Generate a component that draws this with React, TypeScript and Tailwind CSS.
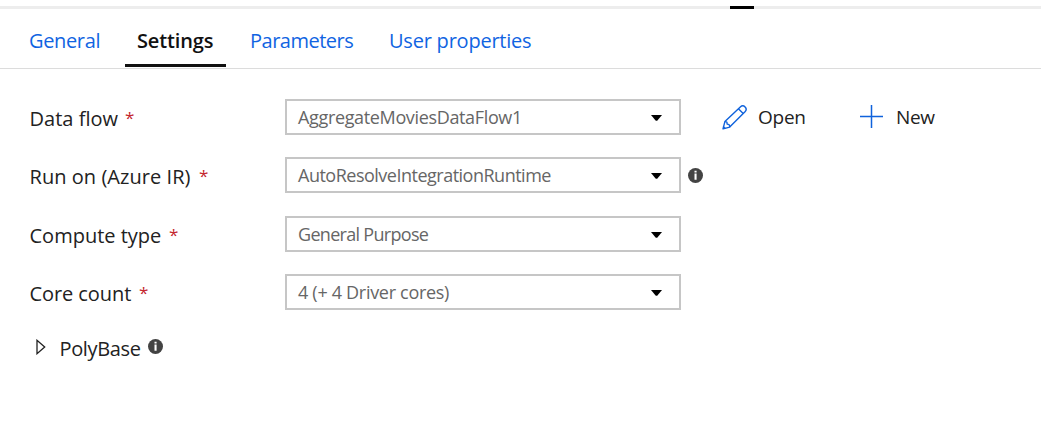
import React from "react";

function InfoIcon({ className = "" }: { className?: string }) {
  return (
    <svg className={className} width="15" height="15" viewBox="0 0 15 15" aria-hidden="true">
      <circle cx="7.5" cy="7.5" r="7.5" fill="#434343" />
      <path d="M6.5 2.8h2.1v1.8H6.5zM6.5 5.6h2.1v6.2H6.5z" fill="#fff" />
    </svg>
  );
}

function PencilIcon() {
  return (
    <svg width="25" height="25" viewBox="0 0 25 25" fill="none" stroke="#0f62dc" strokeWidth="1.4" strokeLinejoin="round" aria-hidden="true">
      <path d="M1 23.9 2.9 16.6 18.3 1.9C19.8.5 21.8.6 23.1 1.9 24.4 3.2 24.4 5.2 23 6.7L7.7 22.1Z" />
      <path d="M2.9 16.6C5.2 16.5 5.1 17.5 5.1 19.1 6.8 19.2 7.9 19.6 7.7 22.1M16.4 3.7 21.2 8.4M1.2 21.6 3.2 23.5" />
    </svg>
  );
}

function PlusIcon() {
  return (
    <svg className="relative -top-px" width="23" height="23" viewBox="0 0 23 23" fill="none" stroke="#0f62dc" strokeWidth="1.5" aria-hidden="true">
      <path d="M0 11.5h23M11.5 0v23" />
    </svg>
  );
}

const tabs = [
  { label: "General", tone: "text-[#1064e2]", box: "ml-[17px] w-[96px] border-transparent", tracking: "tracking-[-0.35px]" },
  { label: "Settings", tone: "text-[#111] font-semibold", box: "ml-3 w-[101px] border-[#111]", tracking: "tracking-[-0.15px]" },
  { label: "Parameters", tone: "text-[#1064e2]", box: "ml-3 w-[127px] border-transparent", tracking: "tracking-[-0.5px]" },
  { label: "User properties", tone: "text-[#1064e2]", box: "ml-3 w-[165px] border-transparent", tracking: "tracking-[-0.22px]" },
];

const fields = [
  { label: "Data flow", labelBox: "w-[95px]", labelTracking: "tracking-[0.03px]", value: "AggregateMoviesDataFlow1", tracking: "tracking-[-0.35px]", gap: "mb-[22px]" },
  { label: "Run on (Azure IR)", labelBox: "w-[169px]", labelTracking: "tracking-[0.05px]", value: "AutoResolveIntegrationRuntime", tracking: "tracking-[-0.5px]", gap: "mb-[23px]" },
  { label: "Compute type", labelBox: "w-[139px]", labelTracking: "tracking-[0px]", value: "General Purpose", tracking: "tracking-[-0.7px]", gap: "mb-[22px]" },
  { label: "Core count", labelBox: "w-[109px]", labelTracking: "tracking-[-0.08px]", value: "4 (+ 4 Driver cores)", tracking: "tracking-[-0.3px]", gap: "mb-[19px]" },
];

export default function App() {
  return (
    <main className="h-[430px] w-full overflow-hidden bg-white pt-1.5 font-['Open_Sans','Noto_Sans',sans-serif] text-[20px] leading-7 text-[#222]">
      <div className="h-[3px] bg-[#ededed] pl-[730px]">
        <div className="h-full w-6 bg-black" />
      </div>
      <nav className="flex h-[60px] border-b border-[#dcdcdc]">
        {tabs.map((t) => (
          <button key={t.label} className={`h-[58px] border-b-3 whitespace-nowrap pl-3 pt-2 text-left ${t.tone} ${t.box} ${t.tracking}`}>
            {t.label}
          </button>
        ))}
      </nav>
      <form className="pt-[30px] pl-[29px]">
        {fields.map((f, i) => (
          <div key={f.label} className={`flex h-9 items-center ${f.gap}`}>
            <div className="flex w-64 pt-[3px]">
              <span className={`pl-[0.5px] whitespace-nowrap ${f.labelBox} ${f.labelTracking}`}>{f.label}</span>
              <span className="pl-[1px] text-[17px] leading-[26px] text-[#c4262e]">*</span>
            </div>
            <div className="flex h-9 w-[396px] items-center justify-between border-2 border-[#c6c6c6] pr-[17px] pl-[11px] text-[18px] text-[#666]">
              <span className={`whitespace-nowrap ${f.tracking}`}>{f.value}</span>
              <svg className="mt-0.5" width="11" height="6" viewBox="0 0 11 6" aria-hidden="true">
                <path d="M0 0h11L6.2 5.7H4.8Z" fill="#000" />
              </svg>
            </div>
            {i === 0 && (
              <div className="flex h-9 items-center pl-[41px]">
                <PencilIcon />
                <span className="ml-[11px] w-[102px] text-[19px] tracking-[-0.25px]">Open</span>
                <PlusIcon />
                <span className="ml-[13px] text-[19px] tracking-[-0.3px]">New</span>
              </div>
            )}
            {i === 1 && <InfoIcon className="ml-[7px]" />}
          </div>
        ))}
        <div className="flex h-9 items-center pl-[7px]">
          <svg width="10" height="16" viewBox="0 0 10 16" fill="none" stroke="#222" strokeWidth="1.3" aria-hidden="true">
            <path d="M1 1.3v13.4L8.7 8Z" />
          </svg>
          <span className="ml-[13px] w-[89px] pt-[3px] pl-[0.5px] tracking-[-0.35px] whitespace-nowrap">PolyBase</span>
          <InfoIcon className="mb-px" />
        </div>
      </form>
    </main>
  );
}
